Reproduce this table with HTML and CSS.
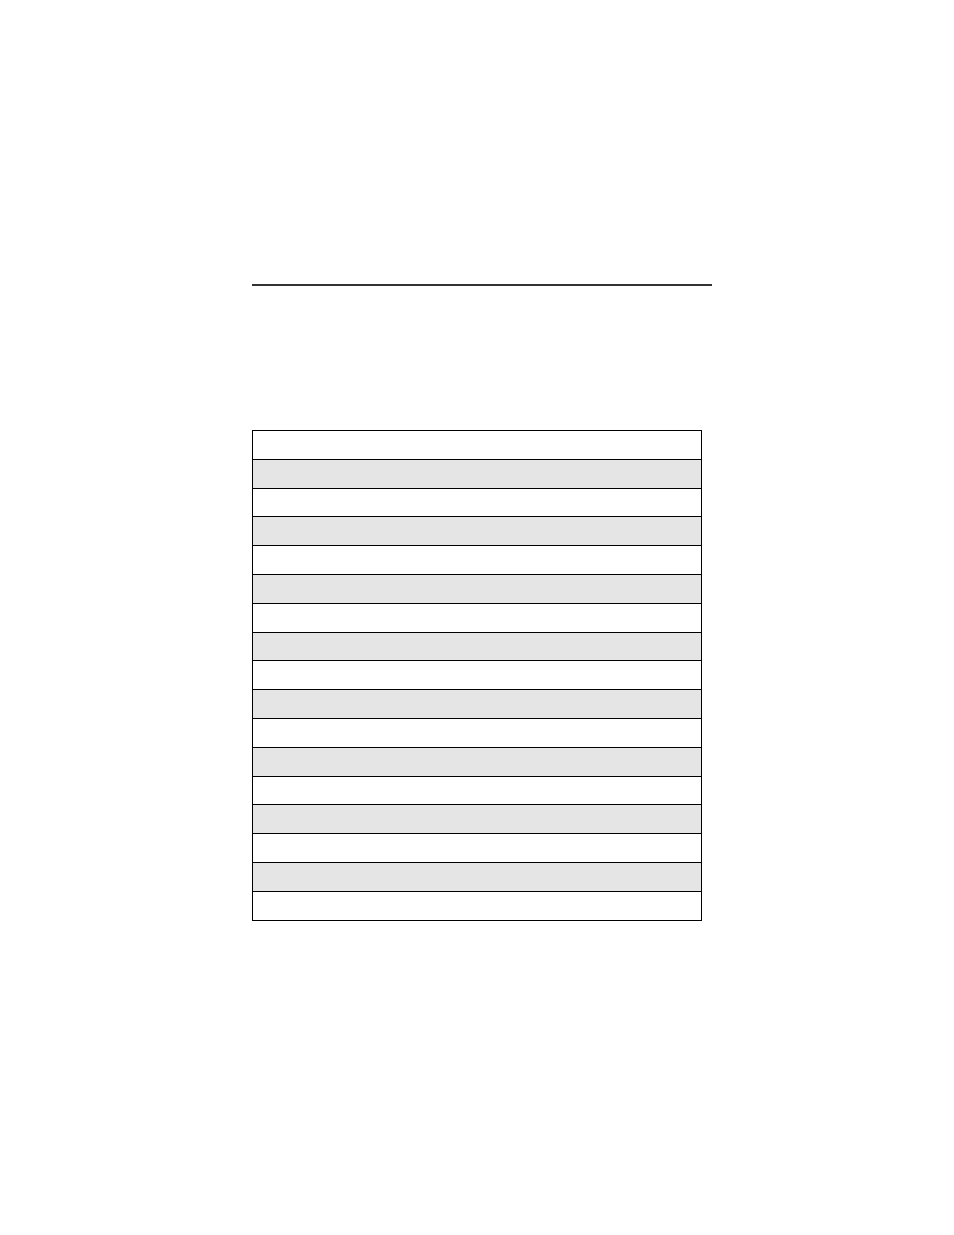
FILE: index.html
```html
<!DOCTYPE html>
<html>
<head>
<meta charset="utf-8">
<link rel="stylesheet" href="styles.css">
</head>
<body>
<div class="page">
  <div class="rule"></div>
  <div class="table">
    <div class="row"></div>
    <div class="row alt"></div>
    <div class="row"></div>
    <div class="row alt"></div>
    <div class="row"></div>
    <div class="row alt"></div>
    <div class="row"></div>
    <div class="row alt"></div>
    <div class="row"></div>
    <div class="row alt"></div>
    <div class="row"></div>
    <div class="row alt"></div>
    <div class="row"></div>
    <div class="row alt"></div>
    <div class="row"></div>
    <div class="row alt"></div>
    <div class="row"></div>
  </div>
</div>
</body>
</html>
```
FILE: styles.css
```css
html, body {
  margin: 0;
  padding: 0;
  background: #ffffff;
  font-family: "Liberation Sans", Arial, sans-serif;
}
.page {
  padding-top: 284px;
  padding-left: 252px;
}
.rule {
  width: 460px;
  height: 2px;
  background: #333333;
}
.table {
  margin-top: 144px;
  width: 448px;
  border: 1px solid #000000;
  display: flex;
  flex-direction: column;
}
.row {
  height: 27.8px;
  background: #ffffff;
}
.row + .row {
  border-top: 1px solid #000000;
}
.row.alt {
  background: #e5e5e5;
}
```
